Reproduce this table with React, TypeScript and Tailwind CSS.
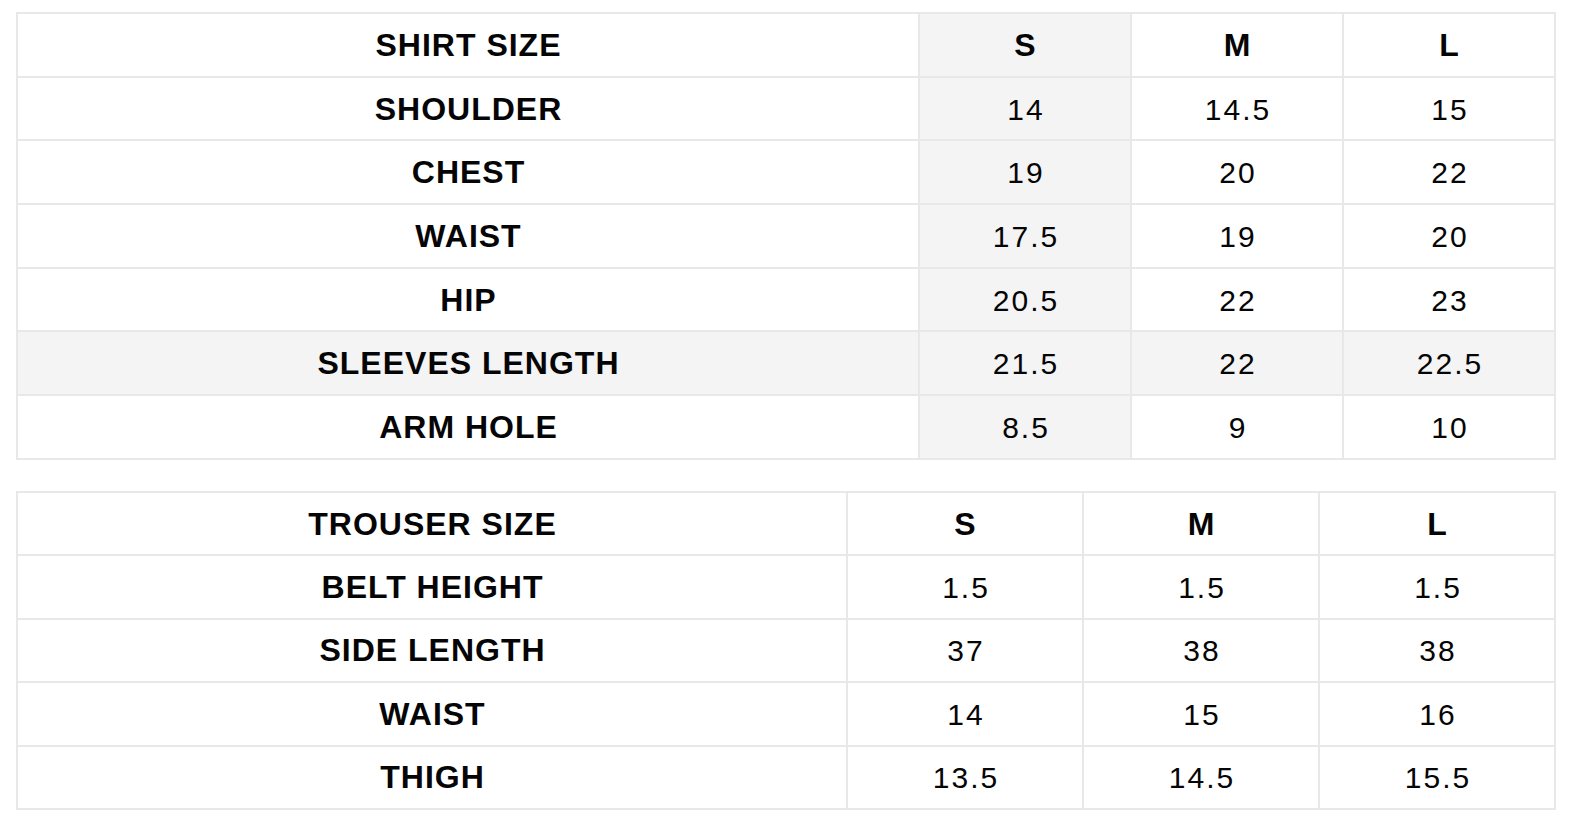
import React from "react";

const shirt = [
  ["SHIRT SIZE", "S", "M", "L"],
  ["SHOULDER", "14", "14.5", "15"],
  ["CHEST", "19", "20", "22"],
  ["WAIST", "17.5", "19", "20"],
  ["HIP", "20.5", "22", "23"],
  ["SLEEVES LENGTH", "21.5", "22", "22.5"],
  ["ARM HOLE", "8.5", "9", "10"],
];

const trouser = [
  ["TROUSER SIZE", "S", "M", "L"],
  ["BELT HEIGHT", "1.5", "1.5", "1.5"],
  ["SIDE LENGTH", "37", "38", "38"],
  ["WAIST", "14", "15", "16"],
  ["THIGH", "13.5", "14.5", "15.5"],
];

export default function App() {
  return (
    <div
      className="w-[1574px] h-[826px] bg-white pt-[12px] pl-[16px] text-[#050505]"
      style={{ fontFamily: '"Liberation Sans", Arial, Helvetica, sans-serif' }}
    >
      <div className="w-[1540px] border-t-2 border-r-2 border-[#e8e8e8]">
        {shirt.map((r, i) => (
          <div
            key={i}
            className={`grid grid-cols-[902px_212px_212px_212px] h-[63.7px] border-b-2 border-[#e8e8e8] ${i === 5 ? "bg-[#f4f4f4]" : ""}`}
          >
            {r.map((c, j) => (
              <div
                key={j}
                className={`flex items-center justify-center border-l-2 border-[#e8e8e8] ${j === 1 ? "bg-[#f4f4f4]" : ""} ${j === 0 || i === 0 ? "font-bold text-[32px] tracking-[1px] pl-[1px]" : "text-[30px] tracking-[2px] pl-[2px] pt-[1px]"}`}
              >
                {c}
              </div>
            ))}
          </div>
        ))}
      </div>
      <div className="w-[1540px] mt-[31px] border-t-2 border-r-2 border-[#e8e8e8]">
        {trouser.map((r, i) => (
          <div
            key={i}
            className="grid grid-cols-[830px_236px_236px_236px] h-[63.46px] border-b-2 border-[#e8e8e8]"
          >
            {r.map((c, j) => (
              <div
                key={j}
                className={`flex items-center justify-center border-l-2 border-[#e8e8e8] ${j === 0 || i === 0 ? "font-bold text-[32px] tracking-[1px] pl-[1px]" : "text-[30px] tracking-[2px] pl-[2px] pt-[1px]"}`}
              >
                {c}
              </div>
            ))}
          </div>
        ))}
      </div>
    </div>
  );
}
